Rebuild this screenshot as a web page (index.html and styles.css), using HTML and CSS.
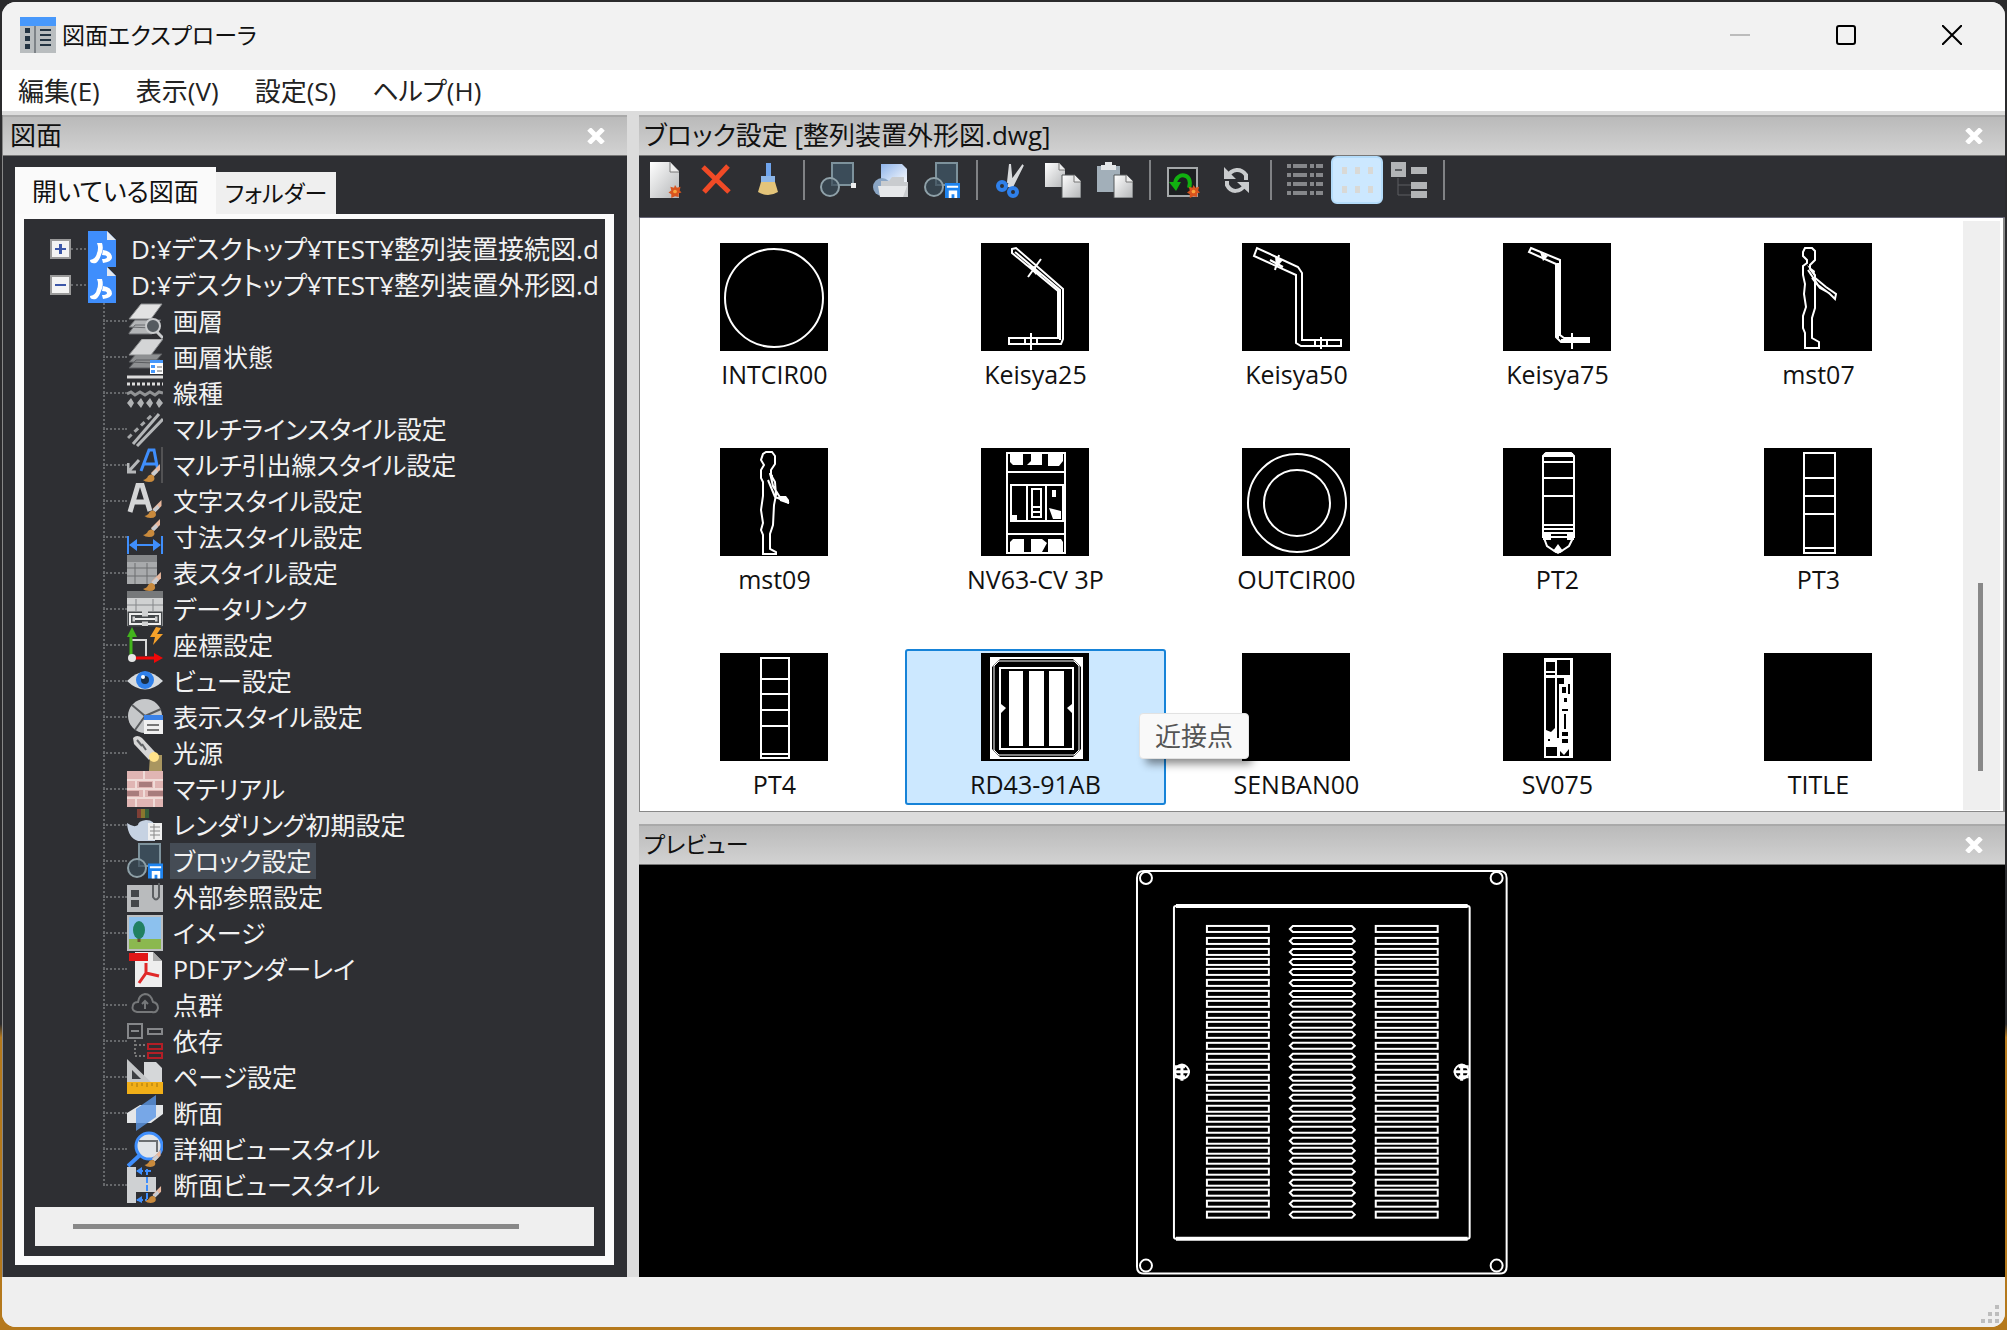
FILE: index.html
```html
<!DOCTYPE html>
<html lang="ja">
<head>
<meta charset="utf-8">
<title>図面エクスプローラ</title>
<link rel="stylesheet" href="styles.css">
</head>
<body>
<svg class="defs" aria-hidden="true">
  <defs>
    <linearGradient id="sheet" x1="0" y1="0" x2="1" y2="1"><stop offset="0" stop-color="#fff"/><stop offset="1" stop-color="#b4b6b8"/></linearGradient>
    <linearGradient id="glass" x1="0" y1="0" x2="1" y2="1"><stop offset="0" stop-color="#8fb4ea"/><stop offset="1" stop-color="#fff"/></linearGradient>
    <symbol id="brush" viewBox="0 0 18 18"><path d="M17 0 8 9l3 3 6-6z" fill="#e8b79c"/><path d="M13 5 8 10l3 2 4-4z" fill="#c9cdd2"/><path d="M0 16q4-1 5-4 3-3 6 0 2 6-5 6-4 0-6-2z" fill="#c98a3c"/></symbol>
    <symbol id="file" viewBox="0 0 28 36"><path d="M0 0h28v36H0z" fill="#3f8efc"/><path d="M19 0h9v9z" fill="#2e2f33"/><path d="M19 0l9 9h-9z" fill="#e4e8ee"/><path d="M9 12h5q2 6-1 12-2 6-5 8-6 1-6-3 6-1 7-7 2-5 0-10z" fill="#fff"/><path d="M15 19q9 1 9 8-1 4-9 5l-1-4q5 0 5-2 0-2-5-2z" fill="#fff"/></symbol>
    <symbol id="block" viewBox="0 0 36 36"><path d="M12 1h21v22H12z" fill="#3b4c59" stroke="#7d929c" stroke-width="2"/><circle cx="10" cy="25" r="9" fill="#3b4c59" fill-opacity=".7" stroke="#8ea0a8" stroke-width="2"/></symbol>
    <symbol id="disk" viewBox="0 0 16 16"><path d="M0 0h16v16H0z" fill="#1e84f0"/><path d="M2 3h12v2H2zM4 8h9v8h-3v-4H7v4H4z" fill="#fff"/></symbol>
    <symbol id="spark" viewBox="0 0 14 14"><path d="M7 0l2 3 4-1-1 4 2 2-3 1 0 4-4-1-4 2 0-4-3-2 3-2-1-4 4 1z" fill="#d9541e"/><circle cx="7" cy="7" r="2" fill="#f9a33c"/></symbol>
    <symbol id="close" viewBox="0 0 18 16"><path d="M2 1 16 15M16 1 2 15" stroke="#fff" stroke-width="5"/></symbol>
  </defs>
</svg>

<div class="window">
  <header class="titlebar">
    <svg class="app-icon" viewBox="0 0 36 36"><path d="M0 0h36v36H0z" fill="#b9bdbf"/><path d="M0 0h36v9H0z" fill="#4798fb"/><path d="M14 9h2v27h-2z" fill="#7d8287"/><path d="M5 11h5v5H5zM5 19h5v5H5zM5 27h5v5H5z" fill="#243442"/><path d="M20 13h11M20 18h11M20 23h11M20 28h11" stroke="#243442" stroke-width="2"/></svg>
    <h1 class="title">図面エクスプローラ</h1>
    <div class="window-buttons">
      <button class="win-btn" aria-label="最小化" disabled><svg viewBox="0 0 20 20"><path d="M0 10h20" stroke="#bcbcbc" stroke-width="2"/></svg></button>
      <button class="win-btn" aria-label="最大化"><svg viewBox="0 0 20 20"><rect x="1" y="1" width="18" height="18" rx="2" fill="none" stroke="#000" stroke-width="2"/></svg></button>
      <button class="win-btn" aria-label="閉じる"><svg viewBox="0 0 20 20"><path d="M0 0l20 20M20 0 0 20" stroke="#000" stroke-width="2"/></svg></button>
    </div>
  </header>

  <nav class="menubar">
    <button>編集(E)</button><button>表示(V)</button><button>設定(S)</button><button>ヘルプ(H)</button>
  </nav>

  <main class="body">
    <section class="pane drawings">
      <div class="pane-head"><h2>図面</h2><button class="pane-close" aria-label="図面を閉じる"><svg><use href="#close"/></svg></button></div>
      <div class="drawings-body">
        <div class="tabs"><button class="tab active">開いている図面</button><button class="tab">フォルダー</button></div>
        <div class="tab-page">
          <div class="tree-box">
            <ul class="tree">
              <li class="root first"><button class="toggle plus" aria-label="展開"></button><i class="link"></i><svg class="file"><use href="#file"/></svg><span>D:¥デスクトップ¥TEST¥整列装置接続図.d</span></li>
              <li class="root"><button class="toggle" aria-label="折りたたむ"></button><i class="link"></i><svg class="file"><use href="#file"/></svg><span>D:¥デスクトップ¥TEST¥整列装置外形図.d</span></li>
              <li><ul class="branch">
                <li><svg viewBox="0 0 36 36"><path d="M2 30 8 22h25l-8 9H2zM2 24l6-7h26l-8 8z" fill="#b3b5b7" stroke="#6b6d70"/><path d="M2 16 14 1h21L24 16z" fill="#e2e2e2" stroke="#8b8d8f"/><circle cx="26" cy="23" r="7" fill="#555b60" stroke="#c9cbcd" stroke-width="2"/><path d="M30 29l6 6" stroke="#c9cbcd" stroke-width="3"/></svg><button>画層</button></li>
                <li><svg viewBox="0 0 36 36"><path d="M2 29l7-8h24l-8 8zM2 23l7-8h26l-8 9z" fill="#8e9092" stroke="#5b5d60"/><path d="M2 16 15 0h21L24 16z" fill="#d4d5d6" stroke="#8b8d8f"/><path d="M23 21h13v14H23z" fill="#fff"/><path d="M23 21h13v3H23zM24 26h4v3h-4zM24 31h4v3h-4z" fill="#4798fb"/><path d="M30 28h5M30 32h5" stroke="#666"/></svg><button>画層状態</button></li>
                <li><svg viewBox="0 0 36 36"><path d="M0 2h36" stroke="#dcdcdc" stroke-width="3"/><path d="M0 9h36" stroke="#dcdcdc" stroke-width="3" stroke-dasharray="3 2"/><path d="M0 19l4-2 4 3 5-3 5 3 5-3 5 3 4-3 4 1" fill="none" stroke="#909294" stroke-width="3"/><path d="M4 23l3 5-3 5-4-5zM14 23l3 5-3 5-4-5zM23 23l3 5-3 5-4-5zM32 23l4 5-4 5-3-5z" fill="#b0b2b4"/></svg><button>線種</button></li>
                <li><svg viewBox="0 0 36 36"><path d="M6 33 32 3M10 35 36 8" stroke="#b4b6b8" stroke-width="3"/><path d="M1 27 27 2" stroke="#a4a6a8" stroke-width="3" stroke-dasharray="5 4"/></svg><button>マルチラインスタイル設定</button></li>
                <li><svg viewBox="0 0 36 36"><path d="M14 24 22 3h5l4 21M17 17h12" fill="none" stroke="#3f8efc" stroke-width="3"/><path d="M12 13 2 24M1 16v9h8" fill="none" stroke="#b5b7b9" stroke-width="3"/><path d="M35 0v36" stroke="#777"/><use href="#brush" x="15" y="17" width="20" height="18"/></svg><button>マルチ引出線スタイル設定</button></li>
                <li><svg viewBox="0 0 36 36"><path d="M3 29 11 2h4l8 26M6 19h15" fill="none" stroke="#d4d5d6" stroke-width="5"/><use href="#brush" x="17" y="17" width="19" height="18"/></svg><button>文字スタイル設定</button></li>
                <li><svg viewBox="0 0 36 36"><use href="#brush" x="14" y="0" width="22" height="18"/><path d="M1 17v18M35 17v18M3 26h30" stroke="#3f8efc" stroke-width="2"/><path d="M2 26l8-6v12zM34 26l-8-6v12z" fill="#3f8efc"/></svg><button>寸法スタイル設定</button></li>
                <li><svg viewBox="0 0 36 36"><path d="M0 0h30v29H0z" fill="#a8aaac"/><path d="M0 0h30v7H0z" fill="#858789"/><path d="M0 13h30M0 21h30M8 8v21M20 8v21" stroke="#6c6e70"/><use href="#brush" x="15" y="17" width="21" height="19"/></svg><button>表スタイル設定</button></li>
                <li><svg viewBox="0 0 36 36"><path d="M0 0h36v35H0z" fill="#d0d1d2"/><path d="M0 0h36v7H0z" fill="#77797b"/><path d="M0 14h36M9 8v12M26 8v12" stroke="#85878a"/><path d="M15 23H3v10h12M21 23h12v10H21M8 28h20" fill="none" stroke="#45484b" stroke-width="5"/><path d="M15 23H3v10h12M21 23h12v10H21M8 28h20" fill="none" stroke="#eee" stroke-width="2"/></svg><button>データリンク</button></li>
                <li><svg viewBox="0 0 36 36"><path d="M5 13h14v16" fill="none" stroke="#d8d8d8" stroke-width="2"/><path d="M4 30V6" stroke="#42b41c" stroke-width="3"/><path d="M0 10 5 0l5 10z" fill="#42b41c"/><path d="M5 31h24" stroke="#f00808" stroke-width="3"/><path d="M27 26l9 5-9 5z" fill="#f00808"/><circle cx="5" cy="31" r="4" fill="#e6e6e6"/><path d="M29 0 23 10h5l-2 8 10-11h-6l4-6z" fill="#f5a12a"/></svg><button>座標設定</button></li>
                <li><svg viewBox="0 0 36 36"><path d="M0 18Q18 0 36 18 18 35 0 18z" fill="#d6dade"/><circle cx="18" cy="17" r="9" fill="#2f80ea"/><circle cx="18" cy="17" r="4" fill="#1b3047"/><circle cx="16" cy="14" r="2" fill="#fff"/></svg><button>ビュー設定</button></li>
                <li><svg viewBox="0 0 36 36"><circle cx="18" cy="17" r="17" fill="#c6c8ca"/><path d="M18 17 5 6M18 17 34 10M18 17 8 31" stroke="#5a5c5f" stroke-width="2"/><path d="M17 16h19v19H17z" fill="#f0f0f0"/><path d="M17 16h19v5H17z" fill="#3b82e8"/><path d="M20 26h12M20 31h12" stroke="#777" stroke-width="2"/></svg><button>表示スタイル設定</button></li>
                <li><svg viewBox="0 0 36 36"><path d="M23 20h12v16H22z" fill="#c8b06c" fill-opacity=".8"/><path d="M6 3q4-4 9 0l13 14-6 8L7 9z" fill="#d6d6d6"/><path d="M10 5l5 6M15 9l4 6" stroke="#606366" stroke-width="2"/><circle cx="27" cy="22" r="5" fill="#ffe28a"/></svg><button>光源</button></li>
                <li><svg viewBox="0 0 36 36"><path d="M0 0h36v36H0z" fill="#e0b5b3"/><path d="M0 9h36M0 18h36M0 27h36M17 0v9M9 9v9M27 9v9M17 18v9M9 27v9M27 27v9" stroke="#f0dcd8" stroke-width="2"/><path d="M12 11h13v5H12zM0 20h12v5H0zM21 20h15v5H21z" fill="#a87c7c"/></svg><button>マテリアル</button></li>
                <li><svg viewBox="0 0 36 36"><path d="M10 2h4v9h-4z" fill="#7f3f36"/><path d="M14 2h4v9h-4z" fill="#8a772e"/><path d="M18 2h4v9h-4z" fill="#375e3a"/><path d="M0 16q7 5 11 2 0-4 8-5 9 0 9 8v13H11Q1 31 0 16z" fill="#c6d2e2"/><path d="M21 16h14v17H21z" fill="#f0f0f0"/><path d="M23 20h10M23 24h10M23 28h10M27 17v15" stroke="#888"/></svg><button>レンダリング初期設定</button></li>
                <li><svg viewBox="0 0 36 36"><use href="#block" width="36" height="36"/><use href="#disk" x="21" y="20" width="15" height="16"/></svg><button class="selected">ブロック設定</button></li>
                <li><svg viewBox="0 0 36 36"><path d="M0 6h36v27H0z" fill="#b9bbbd"/><path d="M4 11h8v7H4zM4 21h8v7H4z" fill="#44474a"/><path d="M26 6v12q3 5 6 0V4" fill="none" stroke="#5c5f62" stroke-width="2"/></svg><button>外部参照設定</button></li>
                <li><svg viewBox="0 0 36 36"><path d="M1 1h34v34H1z" fill="#8cc1ee" stroke="#bcbfc1" stroke-width="2"/><path d="M2 24h32v10H2z" fill="#8bb84f"/><path d="M12 20v7" stroke="#6a5130" stroke-width="3"/><ellipse cx="12" cy="15" rx="6" ry="9" fill="#218061"/></svg><button>イメージ</button></li>
                <li><svg viewBox="0 0 36 36"><path d="M8 1h18l9 9v26H8z" fill="#eee"/><path d="M26 1l9 9h-9z" fill="#aaa"/><path d="M2 2h19v8H2z" fill="#e11717"/><path d="M19 12v10L12 32M19 22l13 3" fill="none" stroke="#e02828" stroke-width="3"/></svg><button>PDFアンダーレイ</button></li>
                <li><svg viewBox="0 0 36 36"><path d="M10 25q-6-1-4-7 1-3 5-3 1-7 7-8 6 0 8 8 5 1 5 6-1 5-6 4z" fill="none" stroke="#76787a" stroke-width="2"/><path d="M18 22v-8M15 17l3-3 3 3" fill="none" stroke="#76787a" stroke-width="2"/></svg><button>点群</button></li>
                <li><svg viewBox="0 0 36 36"><path d="M1 1h14v14H1zM4 8h8M21 6h14v5H21z" fill="none" stroke="#85878a" stroke-width="2"/><path d="M8 17v16h12M8 22h12" fill="none" stroke="#777" stroke-width="2" stroke-dasharray="2 2"/><path d="M21 21h14v5H21zM21 30h14v5H21z" fill="none" stroke="#b31e26" stroke-width="2"/></svg><button>依存</button></li>
                <li><svg viewBox="0 0 36 36"><path d="M17 3h12l6 6v15H17z" fill="#d5d7d9"/><path d="M0 0l26 25H0z" fill="#c3c5c7"/><path d="M5 11l9 9H5z" fill="#3c3f42"/><path d="M0 23h36v12H0z" fill="#f1af18"/><path d="M5 24v3M10 24v4M15 24v3M20 24v4M25 24v3M30 24v4" stroke="#a47410"/></svg><button>ページ設定</button></li>
                <li><svg viewBox="0 0 36 36"><path d="M0 18 13 10h23v9L24 28H0z" fill="#e4e6e8"/><path d="M9 14 29 0v22L9 36z" fill="#5b97e6" fill-opacity=".8"/></svg><button>断面</button></li>
                <li><svg viewBox="0 0 36 36"><circle cx="22" cy="15" r="13" fill="#e1e4e8" stroke="#3f8efc" stroke-width="3"/><path d="M12 10h18v11" fill="none" stroke="#6c6f72" stroke-width="2"/><path d="M1 35 13 24" stroke="#3f8efc" stroke-width="4"/><use href="#brush" x="16" y="19" width="20" height="17"/></svg><button>詳細ビュースタイル</button></li>
                <li><svg viewBox="0 0 36 36"><path d="M0 0h9v10h20v15H9v11H0z" fill="#cfd1d3"/><path d="M20 2v32M10 4h16M10 33h10" stroke="#3f8efc" stroke-width="2" stroke-dasharray="6 2"/><path d="M9 4l6-4v8zM9 33l6-4v7z" fill="#3f8efc"/><use href="#brush" x="17" y="19" width="19" height="17"/></svg><button>断面ビュースタイル</button></li>
              </ul></li>
            </ul>
            <div class="hscroll"><div class="hthumb"></div></div>
          </div>
        </div>
      </div>
    </section>

    <div class="right">
      <section class="pane blocks">
        <div class="pane-head"><h2>ブロック設定 [整列装置外形図.dwg]</h2><button class="pane-close" aria-label="ブロック設定を閉じる"><svg><use href="#close"/></svg></button></div>
        <div class="toolbar">
          <button aria-label="新規"><svg viewBox="0 0 36 36"><path d="M3 0h20l9 9v27H3z" fill="url(#sheet)"/><path d="M23 0v10h9" fill="#eee" stroke="#777"/><use href="#spark" x="21" y="23" width="14" height="13"/></svg></button>
          <button aria-label="削除"><svg viewBox="0 0 36 36"><path d="M4 5l26 25M29 4 5 30" stroke="#f04a26" stroke-width="5"/></svg></button>
          <button aria-label="パージ"><svg viewBox="0 0 36 36"><path d="M15 1h5v14h-5z" fill="#6fa4ec"/><path d="M10 14h14v6H10z" fill="#8db6e8"/><path d="M10 20h14l3 10q-10 6-20 0z" fill="#e3c47a"/></svg></button>
          <i class="sep"></i>
          <button aria-label="ブロック挿入"><svg viewBox="0 0 36 36"><use href="#block" width="36" height="36"/><path d="M31 21h5v5h-5z" fill="#eee"/></svg></button>
          <button aria-label="外部挿入"><svg viewBox="0 0 36 36"><path d="M9 2h21l5 5v16H9z" fill="url(#glass)"/><circle cx="10" cy="25" r="9" fill="#8aa5c4"/><path d="M9 19h8l3-4h12v5h4v15H9z" fill="#c9cccf"/><path d="M6 24h29l-4 11H8z" fill="#e6e8ea"/></svg></button>
          <button aria-label="ブロック保存"><svg viewBox="0 0 36 36"><use href="#block" width="36" height="36"/><use href="#disk" x="21" y="21" width="15" height="15"/></svg></button>
          <i class="sep"></i>
          <button aria-label="切り取り"><svg viewBox="0 0 36 36"><path d="M17 2l2 21-4-3zM30 3 15 24l4 1z" fill="#d8dadc" stroke="#d8dadc" stroke-width="2"/><circle cx="9" cy="24" r="4" fill="none" stroke="#2f80ea" stroke-width="4"/><circle cx="20" cy="30" r="4" fill="none" stroke="#2f80ea" stroke-width="4"/></svg></button>
          <button aria-label="コピー"><svg viewBox="0 0 36 36"><path d="M0 1h14l6 6v18H0z" fill="url(#sheet)"/><path d="M14 1v7h6" fill="#eee" stroke="#777"/><path d="M17 13h13l6 6v17H17z" fill="url(#sheet)" stroke="#55585b"/><path d="M29 13v7h7" fill="#eee" stroke="#777"/></svg></button>
          <button aria-label="貼り付け"><svg viewBox="0 0 36 36"><path d="M0 4h23v26H0z" fill="#a2afb9"/><path d="M4 3h4V0h7v3h4v5H4z" fill="#e4e6e8"/><path d="M17 13h13l6 6v17H17z" fill="url(#sheet)" stroke="#55585b"/><path d="M29 13v7h7" fill="#eee" stroke="#777"/></svg></button>
          <i class="sep"></i>
          <button aria-label="プレビュー再生成"><svg viewBox="0 0 36 36"><path d="M2 6h29v28H2z" fill="#1c1f21" stroke="#a5a8aa" stroke-width="2"/><path d="M23 26c5-15-13-17-14-4" fill="none" stroke="#11b010" stroke-width="4"/><path d="M3 20h12l-5 9z" fill="#11b010"/><use href="#spark" x="21" y="23" width="13" height="13"/></svg></button>
          <button aria-label="更新"><svg viewBox="0 0 36 36"><path d="M9 15c5-9 14-9 19-2v5M28 22c-6 9-15 9-19 1v-4" fill="none" stroke="#c9cbcd" stroke-width="4"/><path d="M6 5v12h12zM31 31V20H19z" fill="#c9cbcd"/></svg></button>
          <i class="sep"></i>
          <button aria-label="詳細表示"><svg viewBox="0 0 36 36"><path d="M0 4h36M0 13h36M0 22h36M0 31h36" stroke="#85878a" stroke-width="4" stroke-dasharray="4 2 14 3 4 2 7 0"/></svg></button>
          <button class="pressed" aria-label="アイコン表示"><svg viewBox="0 0 36 36"><path d="M3 5h5v7H3zM16 5h5v7h-5zM29 5h5v7h-5zM3 24h5v7H3zM16 24h5v7h-5zM29 24h5v7h-5z" fill="#d9d9d6"/></svg></button>
          <button aria-label="ツリー表示"><svg viewBox="0 0 36 36"><path d="M0 0h15v15H0zM20 5h16v7H20zM20 20h16v7H20zM20 29h16v7H20z" fill="#b2b4b6"/><path d="M4 8h7" stroke="#5c5f62" stroke-width="2"/><path d="M7 16v17h13M7 23h13" fill="none" stroke="#5c5f62"/></svg></button>
          <i class="sep"></i>
        </div>
        <div class="list">
          <div class="grid">
            <button class="item"><svg viewBox="0 0 108 108"><circle cx="54" cy="55" r="49"/></svg>INTCIR00</button>
            <button class="item"><svg viewBox="0 0 108 108"><path d="M31 6l4-1 47 41v50l-2 5H28v-6h49V48L31 10zM34 9l45 38v50M47 34 60 16M44 21l17 11M50 90v17M44 95v6M56 95v6"/><path d="M48 24l7-1v9z" class="solid"/></svg>Keisya25</button>
            <button class="item"><svg viewBox="0 0 108 108"><path d="M15 5 12 13l42 19v68l5 3h40v-6H60V30l-4-6zM33 27l4-15M28 17l13 7M79 94v12M73 97v6M85 97v6"/><path d="M33 13l8 4-7 8z" class="solid"/></svg>Keisya50</button>
            <button class="item"><svg viewBox="0 0 108 108"><path d="M28 5l29 12v75l4 3h25v4H58l-5-5V21L26 9z"/><path d="M55 20v75M58 97h27M69 90v16" /><path d="M54 20h4v73h-4zM37 9l8 4-5 5z" class="solid"/></svg>Keisya75</button>
            <button class="item"><svg viewBox="0 0 108 108"><path d="M41 5h7l3 3v9l-5 5v4l5 6v33l-3 10v20l7 4v6H41V90l-2-5V73l3-9-2-13 1-10-2-9v-9l4-3v-3l-4-4V9zM44 27l10 15 12 9M50 34l12 10 10 7-1 5-6-6-9-5-8-10"/><path d="M43 22l8 6-1 5z" class="solid"/></svg>mst07</button>
            <button class="item"><svg viewBox="0 0 108 108"><path d="M46 4h6l3 4v8l-4 6v5l4 7 1 13-2 10-1 20-3 9v15l6 3v2H43V87l-2-5 2-7-2-13 2-14V34l-2-4v-8l3-5-3-5 2-6zM50 25l3 13 8 13M48 32l7 17 8 3 6 3"/><path d="M59 48h7l3 4v4l-9-3zM49 25l4 2-1 7z" class="solid"/></svg>mst09</button>
            <button class="item"><svg viewBox="0 0 108 108"><path d="M26 5h58v100H26zM26 24h58M26 86h58M30 37h52v36H30zM46 37v36M65 37v36M51 41h9v28h-9zM51 59h9M51 64h9"/><path d="M29 5h13v12H32l-3-3zM50 5h11v12H46l4-4zM67 5h15v8l-4 5H67zM29 94l3-3h11v13H29zM50 91h11l5 4-5 9H50zM67 91h13l2 3v10H67zM71 42h4v7h-4zM68 60l12 3v8h-8zM30 67h6v6h-6z" class="solid"/></svg>NV63-CV 3P</button>
            <button class="item"><svg viewBox="0 0 108 108"><circle cx="55" cy="55" r="49"/><circle cx="55" cy="55" r="33"/></svg>OUTCIR00</button>
            <button class="item"><svg viewBox="0 0 108 108"><path d="M40 8l3-3h25l3 3v81H40zM40 14h31M40 30h31M40 48h31M40 77h31M40 81h31M40 85h31M41 90l3 8 9 6h4l9-6 4-8"/><path d="M41 5h29v4H41zM40 86h8v6h-8zM64 86h7v6h-7zM55 96l5 7-5 3-5-3z" class="solid"/></svg>PT2</button>
            <button class="item"><svg viewBox="0 0 108 108"><path d="M40 5h31v100H40zM40 30h31M40 48h31M40 66h31M40 100h31"/></svg>PT3</button>
            <button class="item"><svg viewBox="0 0 108 108"><path d="M41 5h28v100H41zM41 26h28M41 41h28M41 57h28M41 73h28M41 101h28"/></svg>PT4</button>
            <button class="item chosen"><svg viewBox="0 0 108 108"><path d="M10 5h91v100H10zM19 15h73v81H19z"/><path d="M13 13l5-5h75l5 5v84l-5 5H18l-5-5z" stroke-width="1"/><path d="M28 18h14v75H28zM48 18h15v75H48zM68 18h15v75H68zM20 51l5 4-5 5zM91 51l-5 4 5 5zM10 5h10L10 15zM101 5H91l10 10zM10 105V95l10 10zM101 105V95l-10 10z" class="solid"/></svg>RD43-91AB</button>
            <button class="item"><svg viewBox="0 0 108 108"></svg>SENBAN00</button>
            <button class="item"><svg viewBox="0 0 108 108"><path d="M41 5h29v100H41z" class="solid"/><path d="M43 9h9v9h-9zM54 7h13v15H54zM43 20h9v2h-9zM43 25h9v50l-4 4-5-2zM54 25h7v6h-5v54h-2zM59 34h4v6h-4zM65 31h2v10h-2zM61 45h3v4h-3zM59 56h6v2h-6zM61 61h2v15h-2zM59 79h6v4h-6zM59 86h6v4h-6zM43 94h11v9H43zM45 86h2v2h-2zM57 98l4 4 5-6v7h-9z" class="hole"/></svg>SV075</button>
            <button class="item"><svg viewBox="0 0 108 108"></svg>TITLE</button>
          </div>
          <div class="vscroll"><div class="vthumb"></div></div>
          <div class="tooltip" role="tooltip">近接点</div>
        </div>
      </section>

      <section class="pane preview">
        <div class="pane-head"><h2>プレビュー</h2><button class="pane-close" aria-label="プレビューを閉じる"><svg><use href="#close"/></svg></button></div>
        <div class="canvas">
          <svg viewBox="0 0 400 412" fill="none" stroke="#fff" stroke-width="2">
            <defs>
              <g id="slots"><rect x="85" y="-3" width="62" height="6"/><path d="M168 0l3-3h59l3 3-3 3h-59z"/><rect x="254" y="-3" width="62" height="6"/></g>
            </defs>
            <path d="M22 6h356q7 0 7 7v389q0 7-7 7H22q-7 0-7-7V13q0-7 7-7z"/>
            <circle cx="24" cy="13" r="6"/><circle cx="375" cy="13" r="6"/><circle cx="24" cy="401" r="6"/><circle cx="375" cy="401" r="6"/>
            <rect x="52" y="41" width="296" height="333" rx="2"/>
            <path d="M54 41h292M54 374h292" stroke-width="4"/>
            <circle cx="60" cy="207" r="7"/><path d="M60 199v17M52 207h16M53 202h10M53 212h10" stroke-width="3"/>
            <circle cx="340" cy="207" r="7"/><path d="M340 199v17M332 207h16M337 202h10M337 212h10" stroke-width="3"/>
            <g>
              <use href="#slots" y="64"/><use href="#slots" y="76"/><use href="#slots" y="87"/><use href="#slots" y="97"/><use href="#slots" y="107"/><use href="#slots" y="118"/><use href="#slots" y="129"/>
              <use href="#slots" y="139"/><use href="#slots" y="150"/><use href="#slots" y="160"/><use href="#slots" y="170"/><use href="#slots" y="181"/><use href="#slots" y="192"/><use href="#slots" y="202"/>
              <use href="#slots" y="213"/><use href="#slots" y="223"/><use href="#slots" y="233"/><use href="#slots" y="244"/><use href="#slots" y="254"/><use href="#slots" y="265"/><use href="#slots" y="276"/>
              <use href="#slots" y="286"/><use href="#slots" y="296"/><use href="#slots" y="307"/><use href="#slots" y="318"/><use href="#slots" y="328"/><use href="#slots" y="339"/><use href="#slots" y="350"/>
            </g>
          </svg>
        </div>
      </section>
    </div>
  </main>

  <footer class="statusbar"><svg viewBox="0 0 20 20"><path d="M14 0h4v4h-4zM14 7h4v4h-4zM7 7h4v4H7zM14 14h4v4h-4zM7 14h4v4H7zM0 14h4v4H0z" fill="#bdbdbd"/></svg></footer>
</div>
</body>
</html>
```
FILE: styles.css
```css
* { box-sizing: border-box; }

body {
  margin: 0;
  height: 100vh;
  padding: 2px 2px 3px;
  display: flex;
  background: linear-gradient(#2b2b2d 0 77%, #b5791c 78%);
  color: #111;
  font: 25px/36px "Open Sans", "Noto Sans CJK JP", sans-serif;
  font-feature-settings: "palt";
}

h1, h2 { margin: 0; font-size: inherit; font-weight: 400; }
ul { margin: 0; padding: 0; list-style: none; }
svg { display: block; flex: none; }
button { margin: 0; padding: 0; border: 0; background: none; color: inherit; font: inherit; font-feature-settings: inherit; }
.defs { position: absolute; width: 0; height: 0; }

.window {
  flex: 1;
  min-width: 0;
  display: flex;
  flex-direction: column;
  overflow: hidden;
  border-radius: 14px;
  background: #efefef;
}

.titlebar { flex: none; height: 68px; display: flex; align-items: center; padding: 0 0 2px 18px; background: #f2f2f2; }
.app-icon { width: 36px; height: 36px; margin-right: 6px; }
.title { flex: 1; font-size: 23px; }
.window-buttons { display: flex; }
.win-btn { width: 106px; height: 66px; display: grid; place-items: center; }
.win-btn svg { width: 20px; height: 20px; }

.menubar { flex: none; height: 41px; display: flex; align-items: center; gap: 36px; padding: 1px 0 0 16px; background: #fff; color: #222; font-size: 26px; }
.menubar button { white-space: nowrap; }

.body { flex: 1; min-height: 0; display: flex; gap: 12px; padding-top: 4px; background: #dcdcdc; }

.pane { display: flex; flex-direction: column; min-height: 0; }
.pane-head {
  flex: none;
  height: 41px;
  display: flex;
  align-items: center;
  justify-content: space-between;
  padding: 0 22px 0 5px;
  border-top: 2px solid #a9a9a9;
  border-bottom: 1px solid #777;
  background: linear-gradient(#bababa, #d2d2d2);
}
.pane-head h2 { padding-bottom: 3px; font-size: 26px; white-space: nowrap; }
.preview .pane-head h2 { font-size: 23px; }
.pane-close svg { width: 18px; height: 16px; }

.drawings { flex: 0 0 calc(31% + 4px); border-left: 1px solid #888; min-width: 600px; }
.drawings .pane-head { padding: 0 22px 0 7px; }
.drawings-body { flex: 1; min-height: 0; display: flex; flex-direction: column; padding: 11px 13px 12px 12px; background: #2e2f33; }
.tabs { flex: none; display: flex; align-items: flex-end; height: 47px; }
.tab { height: 42px; padding: 0 9px; background: #efefef; font-size: 23px; white-space: nowrap; }
.tab.active { height: 47px; padding: 0 17px; background: #fafafa; font-size: 25px; }
.tab-page { flex: 1; min-height: 0; display: flex; padding: 5px 9px 9px; background: #fbfbfb; }
.tree-box { flex: 1; min-width: 0; display: flex; flex-direction: column; justify-content: space-between; padding: 12px 11px 10px; background: #2e2f33; color: #f2f2f2; }

.tree { white-space: nowrap; }
.root { display: flex; align-items: center; height: 36px; padding-left: 15px; font-size: 26px; }
.root .file { width: 28px; height: 36px; margin: 0 15px 0 2px; }
.link { flex: none; width: 15px; border-top: 2px dotted #66686b; }
.toggle { position: relative; width: 21px; height: 20px; flex: none; border: 2px solid #9a9a9a; background: #f4f4f4; }
.toggle::before, .toggle.plus::after { content: ""; position: absolute; inset: 7px 3px; background: #3c57a8; }
.toggle.plus::after { inset: 3px 7px; }
.branch { margin-left: 68px; position: relative; }
.branch::before { content: ""; position: absolute; top: 0; bottom: 18px; left: 0; border-left: 2px dotted #66686b; }
.branch li { display: flex; align-items: center; height: 36px; }
.branch li::before { content: ""; width: 24px; border-top: 2px dotted #66686b; }
.branch svg { width: 36px; height: 36px; margin-right: 7px; }
.branch button { height: 36px; padding: 0 5px 0 3px; }
.branch .selected { background: #454c55; }

.hscroll { flex: none; height: 39px; display: flex; align-items: center; padding: 0 75px 0 38px; background: #efefef; }
.hthumb { flex: 1; height: 5px; background: #888; }

.right { flex: 1; min-width: 0; display: flex; flex-direction: column; gap: 12px; }
.blocks { flex: 698 1 0; }
.preview { flex: 453 1 0; }

.toolbar { flex: none; height: 62px; display: flex; align-items: flex-start; background: #2e2f33; border-bottom: 1px solid #667; }
.toolbar button { width: 52px; height: 48px; flex: none; display: grid; place-items: center; }
.toolbar svg { width: 36px; height: 36px; }
.toolbar .pressed { border-radius: 6px; background: #cce8ff; border: 2px solid #b4dcfa; }
.sep { flex: none; width: 17px; height: 40px; margin-top: 4px; background: linear-gradient(#808285, #808285) 8px 0 / 2px 40px no-repeat; }

.list { position: relative; flex: 1; min-height: 0; display: flex; background: #fff; border: 1px solid #888; border-width: 0 2px 1px 1px; }
.grid { flex: 1; display: grid; grid-template-columns: repeat(auto-fill, 261px); grid-auto-rows: 156px; row-gap: 49px; align-content: start; padding: 21px 0 0 4px; }
.item { display: flex; flex-direction: column; align-items: center; gap: 5px; padding-top: 3px; border: 1px solid transparent; }
.item svg { width: 108px; height: 108px; background: #000; fill: none; stroke: #fff; stroke-width: 2px; }
.item .solid { fill: #fff; stroke: none; }
.item .hole { fill: #000; stroke: none; }
.item.chosen { border: 2px solid #1683d8; border-radius: 3px; padding-top: 2px; background: #cce8ff; }
.vscroll { flex: none; width: 37px; margin: 3px 3px 1px 0; padding: 362px 17px 39px 15px; display: flex; background: #efefef; }
.vthumb { flex: 1; background: #888; }
.tooltip { position: absolute; left: 499px; top: 495px; padding: 4px 15px; border: 1px solid #e2e2e2; border-radius: 4px; background: #f9f9f9; color: #555; font-size: 26px; box-shadow: 5px 7px 8px -2px rgba(0, 0, 0, .45); }

.canvas { flex: 1; min-height: 0; display: flex; justify-content: center; background: #000; }
.canvas svg { height: 100%; }

.statusbar { flex: none; height: 50px; display: flex; align-items: flex-end; justify-content: flex-end; padding: 0 4px 2px; background: #efefef; }
.statusbar svg { width: 20px; height: 20px; }
```
